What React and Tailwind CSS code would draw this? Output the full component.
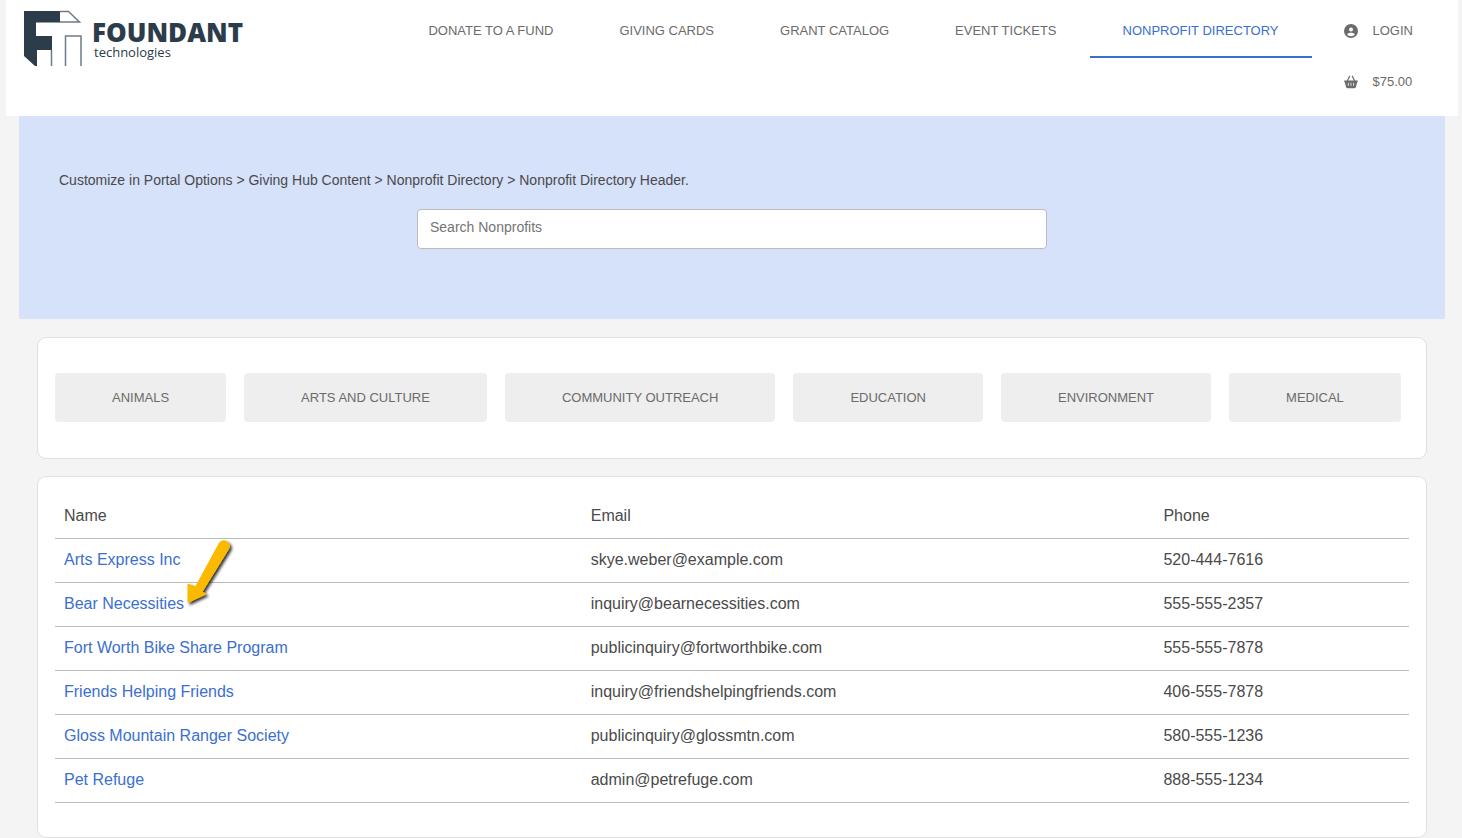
import React from 'react';
import { FaCircleUser, FaBasketShopping } from 'react-icons/fa6';

const navLinks = [
  { label: 'DONATE TO A FUND' },
  { label: 'GIVING CARDS' },
  { label: 'GRANT CATALOG' },
  { label: 'EVENT TICKETS' },
  { label: 'NONPROFIT DIRECTORY', active: true },
];

const categories = [
  'ANIMALS',
  'ARTS AND CULTURE',
  'COMMUNITY OUTREACH',
  'EDUCATION',
  'ENVIRONMENT',
  'MEDICAL',
];

const nonprofits = [
  { name: 'Arts Express Inc', email: 'skye.weber@example.com', phone: '520-444-7616' },
  { name: 'Bear Necessities', email: 'inquiry@bearnecessities.com', phone: '555-555-2357', highlighted: true },
  { name: 'Fort Worth Bike Share Program', email: 'publicinquiry@fortworthbike.com', phone: '555-555-7878' },
  { name: 'Friends Helping Friends', email: 'inquiry@friendshelpingfriends.com', phone: '406-555-7878' },
  { name: 'Gloss Mountain Ranger Society', email: 'publicinquiry@glossmtn.com', phone: '580-555-1236' },
  { name: 'Pet Refuge', email: 'admin@petrefuge.com', phone: '888-555-1234' },
];

const Logo = () => (
  <svg width="222" height="58" viewBox="0 0 222 58" role="img" aria-label="Foundant technologies">
    <path d="M0 1H36V12.5H12V26H28V40H13V56H11L0 46Z" fill="#2c3c4b" />
    <path
      d="M36 1.5H44.5L55.5 12H36M27.5 40V56M41.5 56V26H57V56"
      fill="none"
      stroke="#6f7b86"
      strokeWidth="1.5"
    />
    <text x="68" y="32" fill="#2c3c4b" fontSize="26" className="font-['Open_Sans',sans-serif] font-extrabold">
      FOUNDANT
    </text>
    <text x="70" y="47" fill="#2c3c4b" fontSize="13" className="font-['Open_Sans',sans-serif]">
      technologies
    </text>
  </svg>
);

const Arrow = () => (
  <svg
    width="56"
    height="76"
    viewBox="0 0 56 76"
    aria-hidden="true"
    className="absolute left-full -top-[54px] ml-[3px]"
  >
    <defs>
      <filter id="arrow-shadow" x="-20%" y="-20%" width="150%" height="150%">
        <feDropShadow dx="2" dy="2" stdDeviation="1.5" floodColor="#000" floodOpacity="0.8" />
      </filter>
    </defs>
    <path
      d="M32.4 5A5.5 5.5 0 0 1 41.6 11L15 54L19 56L1 64.500L1 46L8.500 49Z"
      fill="#fbba00"
      stroke="#fbba00"
      strokeLinejoin="round"
      filter="url(#arrow-shadow)"
    />
  </svg>
);

const Header = () => (
  <header className="bg-white flex items-start justify-between px-[13px] pt-[5px] pb-[9px]">
    <a href="#" className="ml-[5px] mt-[5px] shrink-0">
      <Logo />
    </a>
    <nav className="flex items-start text-[13px] leading-5 text-[#6b6b6b]">
      {navLinks.map((link) => (
        <a
          key={link.label}
          href="#"
          className={`px-[33px] pt-4 pb-[15px] border-b-2 whitespace-nowrap ${
            link.active ? 'text-[#3b6fcf] border-[#3b6fcf]' : 'border-transparent'
          }`}
        >
          {link.label}
        </a>
      ))}
      <div className="flex flex-col px-8">
        <a href="#" className="flex items-center gap-[15px] pt-4 pb-[15px]">
          <FaCircleUser size={14} />
          LOGIN
        </a>
        <a href="#" className="flex items-center gap-[15px] pt-4 pb-[15px]">
          <FaBasketShopping size={14} />
          $75.00
        </a>
      </div>
    </nav>
  </header>
);

const App = () => {
  return (
    <div className="min-h-screen bg-[#f4f4f4] pl-[6px] pr-1 font-['Liberation_Sans',Arial,sans-serif] text-[#4a4a4a]">
      <Header />

      <main className="mx-[13px]">
        {/* Directory header */}
        <section className="bg-[#d6e1fa] px-10 pt-[54px] pb-[70px]">
          <p className="text-sm leading-5">
            Customize in Portal Options &gt; Giving Hub Content &gt; Nonprofit Directory &gt; Nonprofit Directory Header.
          </p>
          <input
            type="text"
            aria-label="Search Nonprofits"
            placeholder="Search Nonprofits"
            className="block w-full max-w-[630px] h-10 mx-auto mt-[19px] px-3 pb-1 text-sm bg-white border border-[#bbb] rounded placeholder:text-[#757575]"
          />
        </section>

        {/* Categories */}
        <section className="mx-[18px] mt-[18px] px-[17px] pt-[35px] pb-9 bg-white border border-[#e0e0e0] rounded-[9px] flex flex-wrap gap-[18px]">
          {categories.map((category) => (
            <button
              key={category}
              type="button"
              className="h-[49px] px-[57px] bg-[#eee] text-[#6b6b6b] text-[13px] rounded whitespace-nowrap"
            >
              {category}
            </button>
          ))}
        </section>

        {/* Nonprofits */}
        <section className="mx-[18px] mt-[17px] px-[17px] pt-[17px] pb-[34px] bg-white border border-[#e0e0e0] rounded-[9px]">
          <table className="w-full table-fixed border-collapse text-base leading-6 text-left">
            <thead>
              <tr className="h-11 border-b border-[#bbb]">
                <th className="w-[38.9%] px-[9px] font-normal">Name</th>
                <th className="w-[42.3%] px-[9px] font-normal">Email</th>
                <th className="px-[9px] font-normal">Phone</th>
              </tr>
            </thead>
            <tbody>
              {nonprofits.map((org) => (
                <tr key={org.name} className="h-11 border-b border-[#bbb]">
                  <td className="px-[9px]">
                    <span className="relative inline-block">
                      <a href="#" className="text-[#3b6fcf]">{org.name}</a>
                      {org.highlighted && <Arrow />}
                    </span>
                  </td>
                  <td className="px-[9px]">{org.email}</td>
                  <td className="px-[9px]">{org.phone}</td>
                </tr>
              ))}
            </tbody>
          </table>
        </section>
      </main>
    </div>
  );
};

export default App;
